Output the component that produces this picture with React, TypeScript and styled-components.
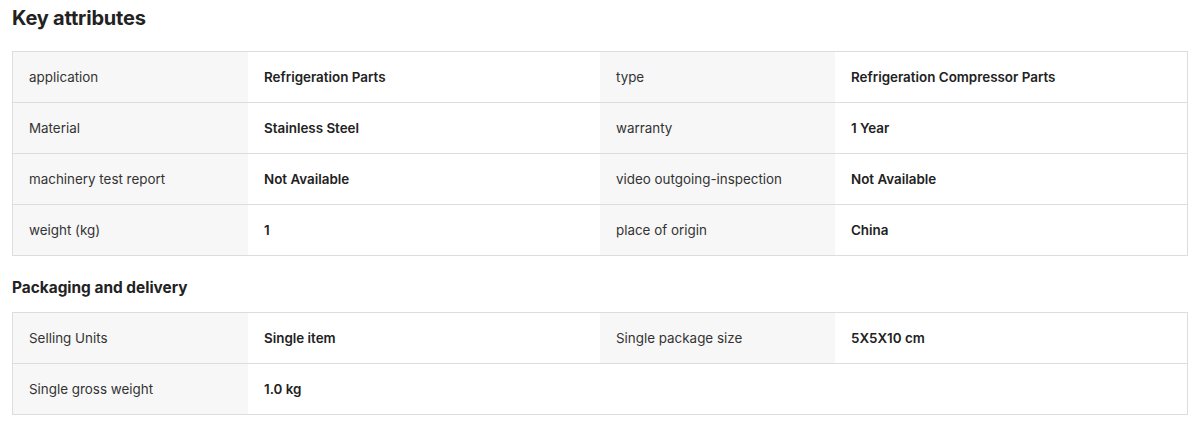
import * as React from 'react';
import styled, {createGlobalStyle} from 'styled-components';

const Global = createGlobalStyle`
  html, body {
    margin: 0;
    padding: 0;
    background: #fff;
  }
  body {
    font-family: Inter, "Noto Sans", "Liberation Sans", sans-serif;
    color: #222;
  }
`;

const Page = styled.div`
  padding: 4px 12px 0 12px;
  width: 1176px;
`;

const Title = styled.h2`
  margin: 0 0 19px 0;
  font-size: 20px;
  line-height: 28px;
  font-weight: 700;
  color: #222;
  letter-spacing: -0.2px;
`;

const SubTitle = styled.h3`
  margin: 20px 0 12px 0;
  font-size: 15.4px;
  line-height: 24px;
  font-weight: 700;
  color: #222;
`;

const Table = styled.div`
  display: grid;
  grid-template-columns: 235px 352px 235px 1fr;
  border: 1px solid #ddd;
  border-bottom: none;
`;

const Cell = styled.div<{$label?: boolean}>`
  height: 50px;
  display: flex;
  align-items: center;
  padding: 0 16px;
  border-bottom: 1px solid #ddd;
  font-size: 13.4px;
  background: ${p => (p.$label ? '#f7f7f7' : '#fff')};
  color: ${p => (p.$label ? '#333' : '#222')};
  font-weight: ${p => (p.$label ? 400 : 600)};
`;

type Pair = [string, string];

const keyAttrs: Pair[][] = [
  [['application', 'Refrigeration Parts'], ['type', 'Refrigeration Compressor Parts']],
  [['Material', 'Stainless Steel'], ['warranty', '1 Year']],
  [['machinery test report', 'Not Available'], ['video outgoing-inspection', 'Not Available']],
  [['weight (kg)', '1'], ['place of origin', 'China']],
];

const packaging: Pair[][] = [
  [['Selling Units', 'Single item'], ['Single package size', '5X5X10 cm']],
  [['Single gross weight', '1.0 kg']],
];

const AttrTable: React.FC<{rows: Pair[][]}> = ({rows}) => (
  <Table>
    {rows.map((row, i) => (
      <React.Fragment key={i}>
        {row.map(([k, v]) => (
          <React.Fragment key={k}>
            <Cell $label>{k}</Cell>
            <Cell>{v}</Cell>
          </React.Fragment>
        ))}
        {row.length < 2 && (
          <>
            <Cell />
            <Cell />
          </>
        )}
      </React.Fragment>
    ))}
  </Table>
);

export default function App() {
  return (
    <Page>
      <Global />
      <Title>Key attributes</Title>
      <AttrTable rows={keyAttrs} />
      <SubTitle>Packaging and delivery</SubTitle>
      <AttrTable rows={packaging} />
    </Page>
  );
}
